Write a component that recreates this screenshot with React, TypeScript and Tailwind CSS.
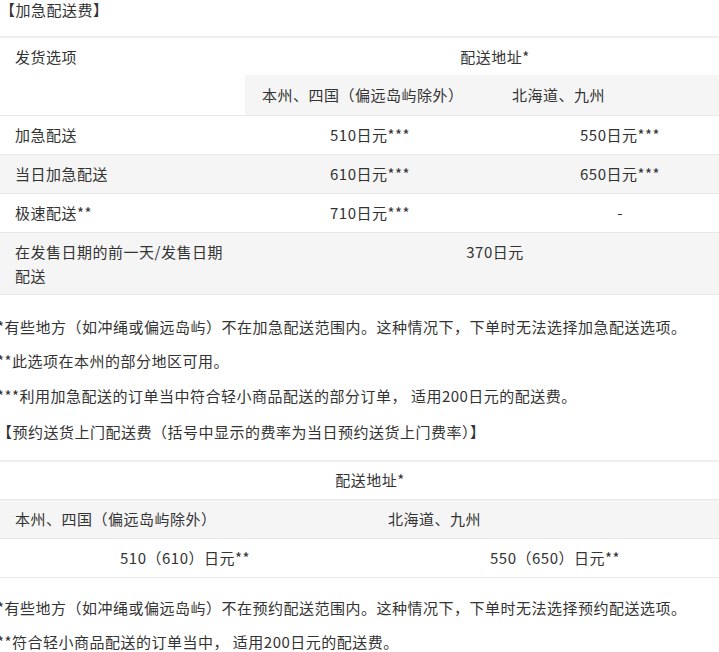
export default function App() {
  const f = { fontFamily: '"Noto Sans CJK SC", "Noto Sans", sans-serif' };
  const b = "border-b border-[#e8e8e8]";
  return (
    <div style={f} className="w-[719px] h-[652px] overflow-hidden bg-white text-[15px] tracking-[0.5px] leading-[20px] text-[#333]">
      <div className="pt-[0px] h-[36px]">【加急配送费】</div>
      <table className="w-[745px] border-collapse border-t-2 border-[#eee] table-fixed">
        <colgroup><col className="w-[245px]" /><col className="w-[250px]" /><col className="w-[250px]" /></colgroup>
        <tbody>
          <tr>
            <td rowSpan={2} className={`${b} align-top pl-[15px] pt-[9px]`}>发货选项</td>
            <td colSpan={2} className="text-center h-[38px] pt-[1px]">配送地址*</td>
          </tr>
          <tr className="bg-[#f5f5f5]">
            <td className={`${b} pl-[17px] h-[40px]`}>本州、四国（偏远岛屿除外）</td>
            <td className={`${b} pl-[17px]`}>北海道、九州</td>
          </tr>
          <tr><td className={`${b} pl-[15px] h-[39px]`}>加急配送</td><td className={`${b} text-center`}>510日元***</td><td className={`${b} text-center`}>550日元***</td></tr>
          <tr className="bg-[#f5f5f5]"><td className={`${b} pl-[15px] h-[39px]`}>当日加急配送</td><td className={`${b} text-center`}>610日元***</td><td className={`${b} text-center`}>650日元***</td></tr>
          <tr><td className={`${b} pl-[15px] h-[39px]`}>极速配送**</td><td className={`${b} text-center`}>710日元***</td><td className={`${b} text-center`}>-</td></tr>
          <tr className="bg-[#f5f5f5]"><td className={`${b} pl-[15px] pr-[15px] h-[62px] leading-[24px] align-top pt-[7px]`}>在发售日期的前一天/发售日期配送</td><td colSpan={2} className={`${b} text-center align-top pt-[9px]`}>370日元</td></tr>
        </tbody>
      </table>
      <div className="-ml-[3px] whitespace-nowrap">
        <div className="mt-[22px]">*有些地方（如冲绳或偏远岛屿）不在加急配送范围内。这种情况下，下单时无法选择加急配送选项。</div>
        <div className="mt-[14px]">**此选项在本州的部分地区可用。</div>
        <div className="mt-[15px]">***利用加急配送的订单当中符合轻小商品配送的部分订单， 适用200日元的配送费。</div>
        <div className="mt-[16px]">【预约送货上门配送费（括号中显示的费率为当日预约送货上门费率）】</div>
      </div>
      <table className="mt-[18px] w-[740px] border-collapse border-t-2 border-[#eee] table-fixed">
        <colgroup><col className="w-[370px]" /><col className="w-[370px]" /></colgroup>
        <tbody>
          <tr><td colSpan={2} className={`${b} text-center h-[39px]`}>配送地址*</td></tr>
          <tr className="bg-[#f5f5f5]"><td className={`${b} pl-[15px] h-[39px]`}>本州、四国（偏远岛屿除外）</td><td className={`${b} pl-[18px]`}>北海道、九州</td></tr>
          <tr><td className={`${b} text-center h-[39px]`}>510（610）日元**</td><td className={`${b} text-center`}>550（650）日元**</td></tr>
        </tbody>
      </table>
      <div className="-ml-[3px] whitespace-nowrap">
        <div className="mt-[20px]">*有些地方（如冲绳或偏远岛屿）不在预约配送范围内。这种情况下，下单时无法选择预约配送选项。</div>
        <div className="mt-[14px]">**符合轻小商品配送的订单当中， 适用200日元的配送费。</div>
      </div>
    </div>
  );
}
